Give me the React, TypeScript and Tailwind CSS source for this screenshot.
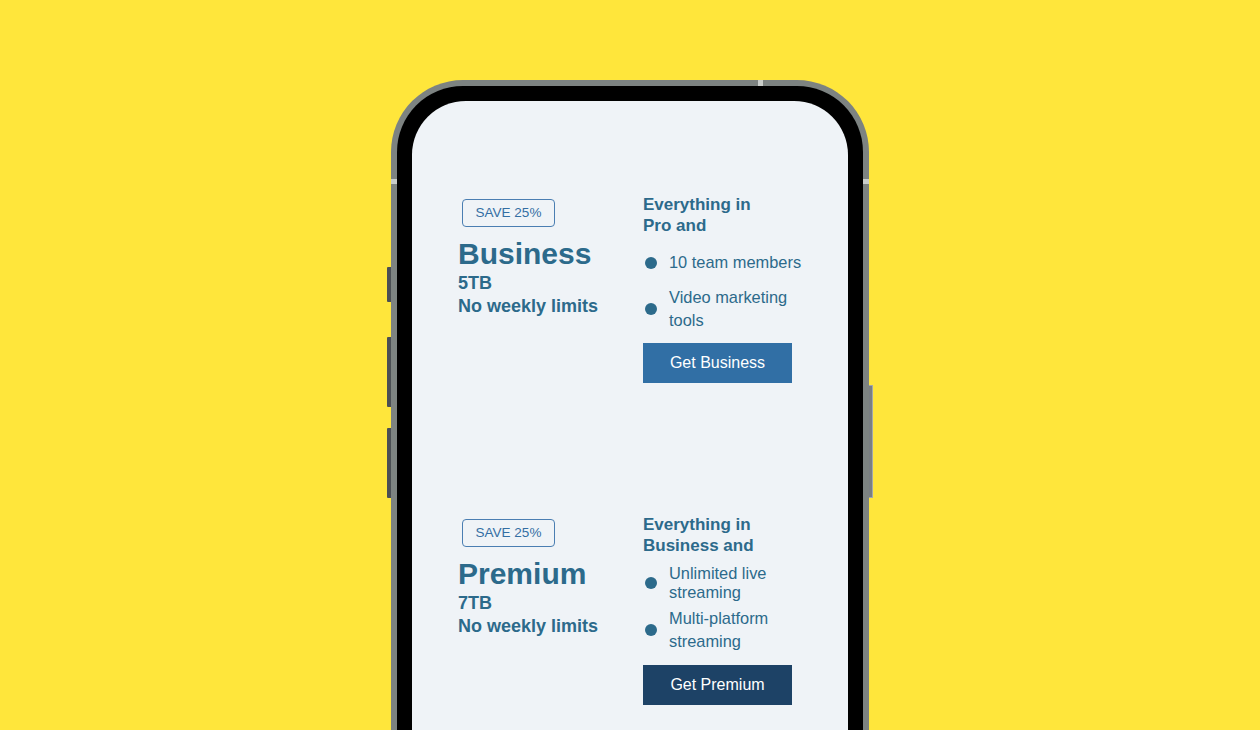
import React from "react";

const font = { fontFamily: '"Liberation Sans", Arial, Helvetica, sans-serif' };

function Bullet({ children, lh }: { children: React.ReactNode; lh: string }) {
  return (
    <li className="flex items-center">
      <span className="ml-[2px] h-[12px] w-[12px] shrink-0 rounded-full bg-[#2c6a8b]" />
      <span className={`ml-[12px] w-[140px] text-[16.4px] text-[#2c6a8b] ${lh}`}>{children}</span>
    </li>
  );
}

export default function App() {
  return (
    <div style={font} className="relative flex h-[730px] w-[1260px] justify-center overflow-hidden bg-[#ffe63b]">
      <div className="relative mt-[80px] h-[820px] w-[478px] shrink-0">
        {/* side buttons */}
        <div className="absolute left-[-4px] top-[187px] h-[35px] w-[4px] rounded-l-[1px] bg-[#4b4f54]" />
        <div className="absolute left-[-4px] top-[257px] h-[70px] w-[4px] rounded-l-[1px] bg-[#4b4f54]" />
        <div className="absolute left-[-4px] top-[348px] h-[70px] w-[4px] rounded-l-[1px] bg-[#4b4f54]" />
        <div className="absolute right-[-4px] top-[305px] h-[113px] w-[4px] rounded-r-[1px] border border-l-0 border-[#a3a8ab] bg-[#7a7f83]" />
        {/* frame */}
        <div className="h-full w-full rounded-[72px] bg-[#7d8381] p-[6px]">
          <div className="h-full w-full rounded-[66px] bg-black p-[15px]">
            <div className="h-full w-full overflow-hidden rounded-[54px] bg-[#eff3f7] pl-[46px] pt-[93px]">
              {/* Card 1 */}
              <div className="flex h-[320px] items-start">
                <div className="mt-[5px] w-[185px]">
                  <div className="ml-[4px] flex h-[28px] w-[93px] items-center justify-center rounded-[4px] border border-[#4a7eb2] text-[13.5px] text-[#336ea3]">
                    SAVE 25%
                  </div>
                  <div className="mt-[8px] text-[30px] font-bold leading-[37px] text-[#2c6a8b]">Business</div>
                  <div className="text-[18px] font-bold leading-[23px] text-[#2c6a8b]">5TB</div>
                  <div className="text-[18px] font-bold leading-[23px] text-[#2c6a8b]">No weekly limits</div>
                </div>
                <div className="w-[170px]">
                  <div className="w-[130px] text-[17px] font-bold leading-[21px] text-[#2c6a8b]">
                    Everything in
                    <br />
                    Pro and
                  </div>
                  <ul className="mt-[15px] flex flex-col gap-[12px]">
                    <Bullet lh="leading-[23px]">10 team members</Bullet>
                    <Bullet lh="leading-[23px]">Video marketing tools</Bullet>
                  </ul>
                  <button className="mt-[11px] flex h-[40px] w-[149px] items-center justify-center bg-[#316fa5] text-[16px] text-white">
                    Get Business
                  </button>
                </div>
              </div>
              {/* Card 2 */}
              <div className="flex h-[320px] items-start">
                <div className="mt-[5px] w-[185px]">
                  <div className="ml-[4px] flex h-[28px] w-[93px] items-center justify-center rounded-[4px] border border-[#4a7eb2] text-[13.5px] text-[#336ea3]">
                    SAVE 25%
                  </div>
                  <div className="mt-[8px] text-[30px] font-bold leading-[37px] text-[#2c6a8b]">Premium</div>
                  <div className="text-[18px] font-bold leading-[23px] text-[#2c6a8b]">7TB</div>
                  <div className="text-[18px] font-bold leading-[23px] text-[#2c6a8b]">No weekly limits</div>
                </div>
                <div className="w-[170px]">
                  <div className="w-[130px] text-[17px] font-bold leading-[21px] text-[#2c6a8b]">
                    Everything in
                    <br />
                    Business and
                  </div>
                  <ul className="mt-[8px] flex flex-col gap-[5px]">
                    <Bullet lh="leading-[19px]">Unlimited live streaming</Bullet>
                    <Bullet lh="leading-[23px]">Multi-platform streaming</Bullet>
                  </ul>
                  <button className="mt-[12px] flex h-[40px] w-[149px] items-center justify-center bg-[#1d4266] text-[16px] text-white">
                    Get Premium
                  </button>
                </div>
              </div>
            </div>
          </div>
        </div>
        {/* antenna bands */}
        <div className="absolute left-0 top-[99px] h-[5px] w-[6px] bg-[#c9cdca]" />
        <div className="absolute right-0 top-[99px] h-[5px] w-[6px] bg-[#c9cdca]" />
        <div className="absolute left-[367px] top-0 h-[6px] w-[5px] bg-[#c9cdca]" />
      </div>
    </div>
  );
}
